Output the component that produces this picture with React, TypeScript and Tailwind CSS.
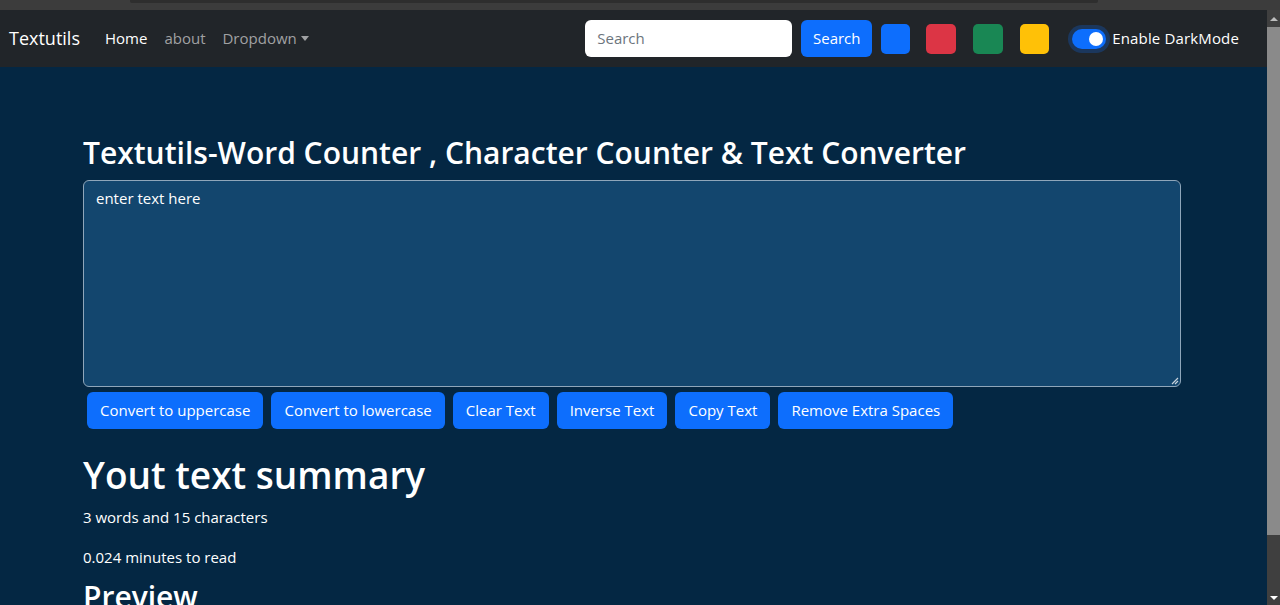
import React from "react";

const font = { fontFamily: '"Open Sans", "Noto Sans", sans-serif' };

function Navbar() {
  return (
    <nav className="flex h-[57px] shrink-0 items-center bg-[#212529] pl-[9px] pr-[28px]">
      <span className="text-[18px] text-white">Textutils</span>
      <div className="ml-[25px] flex items-center gap-[17px] text-[15px]">
        <span className="text-white">Home</span>
        <span className="text-[#a0a1a3]">about</span>
        <span className="flex items-center text-[#a0a1a3]">
          Dropdown
          <span className="ml-[4px] inline-block h-0 w-0 border-x-[4px] border-t-[5px] border-x-transparent border-t-[#a0a1a3]" />
        </span>
      </div>
      <div className="ml-auto flex items-center">
        <div className="flex h-[37px] w-[207px] items-center rounded-[6px] bg-white px-[12px] text-[15px] text-[#6c757d]">
          Search
        </div>
        <div className="ml-[9px] flex h-[37px] w-[71px] items-center justify-center rounded-[6px] bg-[#0d6efd] text-[15px] text-white">
          Search
        </div>
        <div className="ml-[9px] h-[30px] w-[29px] rounded-[5px] bg-[#0d6efd]" />
        <div className="ml-[16px] h-[30px] w-[30px] rounded-[5px] bg-[#dc3545]" />
        <div className="ml-[17px] h-[30px] w-[30px] rounded-[5px] bg-[#198754]" />
        <div className="ml-[17px] h-[30px] w-[29px] rounded-[5px] bg-[#ffc107]" />
        <div className="ml-[23px] flex h-[20px] w-[34px] items-center justify-end rounded-full bg-[#0d6efd] pr-[3px] shadow-[0_0_0_4px_rgba(13,110,253,0.25)]">
          <div className="h-[14px] w-[14px] rounded-full bg-white" />
        </div>
        <span className="ml-[6px] text-[15px] tracking-[0.15px] text-white">Enable DarkMode</span>
      </div>
    </nav>
  );
}

function Btn({ children }: { children: React.ReactNode }) {
  return (
    <div className="flex h-[37px] items-center rounded-[6px] bg-[#0d6efd] px-[13px] text-[15px] text-white">
      {children}
    </div>
  );
}

function Scrollbar() {
  return (
    <div className="flex w-[13px] shrink-0 flex-col bg-[#3f3f3f]">
      <div className="flex h-[17px] shrink-0 items-center justify-center bg-[#3f3f3f]">
        <span className="inline-block h-0 w-0 border-x-[4px] border-b-[4px] border-x-transparent border-b-[#bdbdbd]" />
      </div>
      <div className="h-[508px] shrink-0 bg-[#8a8a8a]" />
      <div className="flex-1" />
      <div className="flex h-[14px] shrink-0 items-center justify-center">
        <span className="inline-block h-0 w-0 border-x-[4px] border-t-[4px] border-x-transparent border-t-white" />
      </div>
    </div>
  );
}

export default function App() {
  return (
    <div className="flex h-[605px] w-[1280px] flex-col overflow-hidden bg-[#042743]" style={font}>
      <div className="relative h-[10px] shrink-0 bg-[#3c3c3c]">
        <div className="absolute left-[130px] top-0 h-[3px] w-[968px] rounded-b-[2px] bg-[#2e2e2e]" />
      </div>
      <div className="flex min-h-0 flex-1 overflow-hidden">
        <div className="flex min-w-0 flex-1 flex-col overflow-hidden">
          <Navbar />
          <main className="shrink-0 px-[83px] pt-[68px] text-white">
            <h2 className="text-[30px] font-semibold leading-[36px]">
              Textutils-Word Counter , Character Counter &amp; Text Converter
            </h2>
            <div className="relative mt-[9px] h-[207px] w-[1098px] rounded-[6px] border border-[#8fa6ba] bg-[#13466e] px-[12px] py-[6px] text-[15px]">
              enter text here
              <svg className="absolute bottom-[1px] right-[1px]" width="9" height="9" viewBox="0 0 9 9">
                <path d="M8 2 L2 8 M8 5 L5 8" stroke="#c8d2dc" strokeWidth="1.2" />
              </svg>
            </div>
            <div className="ml-[4px] mt-[5px] flex gap-[8px]">
              <Btn>Convert to uppercase</Btn>
              <Btn>Convert to lowercase</Btn>
              <Btn>Clear Text</Btn>
              <Btn>Inverse Text</Btn>
              <Btn>Copy Text</Btn>
              <Btn>Remove Extra Spaces</Btn>
            </div>
            <h1 className="mt-[22px] text-[37px] font-semibold leading-[48px]">Yout text summary</h1>
            <p className="mt-[6px] text-[15px] leading-[24px]">3 words and 15 characters</p>
            <p className="mt-[16px] text-[15px] leading-[24px]">0.024 minutes to read</p>
            <h2 className="mt-[10px] text-[30px] font-semibold leading-[36px]">Preview</h2>
          </main>
        </div>
        <Scrollbar />
      </div>
    </div>
  );
}
